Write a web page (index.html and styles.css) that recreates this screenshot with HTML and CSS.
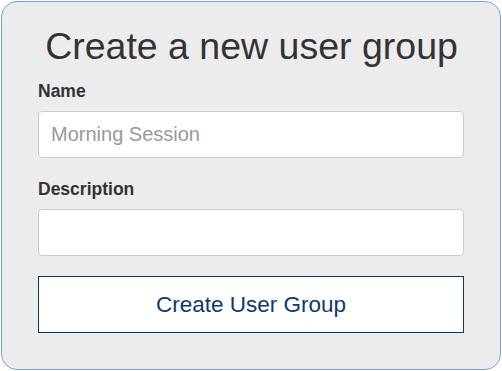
FILE: index.html
```html
<!DOCTYPE html>
<html lang="en">
<head>
    <meta charset="UTF-8">
    <meta name="viewport" content="width=device-width, initial-scale=1.0">
    <title>Create User Group</title>
    <link rel="stylesheet" href="styles.css">
</head>
<body>

    <div id="group-form">
        <h1>Create a new user group</h1>
        <div class="form-group">
            <label for="name">Name</label>
            <input type="text" id="name" placeholder="Morning Session">
        </div>
        <div class="form-group">
            <label for="description">Description</label>
            <input type="text" id="description">
        </div>
        <button class="create-btn">Create User Group</button>
    </div>

</body>
</html>
```

FILE: styles.css
```css
/* General Styles */
body {
    font-family: 'Liberation Sans', Arial, sans-serif;
    margin: 0;
    padding: 1px;
    color: #333;
}

#group-form {
    width: 427px;
    height: 309px;
    background: #ececec;
    border: 1px solid #74a6de;
    border-radius: 16px;
    padding: 24px 35px 34px 36px;
}

h1 {
    font-size: 37.5px;
    font-weight: normal;
    line-height: 41px;
    text-align: center;
    margin: 0 0 14px 0;
}

.form-group {
    margin-bottom: 21px;
}

.form-group label {
    display: block;
    font-size: 17.5px;
    font-weight: bold;
    line-height: 21px;
    margin-bottom: 9px;
}

.form-group input {
    display: block;
    box-sizing: border-box;
    width: 426px;
    height: 47px;
    padding: 0 12px;
    font-family: inherit;
    font-size: 20px;
    color: #555;
    background: #fff;
    border: 1px solid #ccc;
    border-radius: 4px;
    margin: 0;
}

.form-group input::placeholder {
    color: #999;
}

.create-btn {
    display: block;
    box-sizing: border-box;
    width: 426px;
    height: 57px;
    margin-top: -1px;
    font-family: inherit;
    font-size: 22.5px;
    color: #0d3b6e;
    background: #fff;
    border: 1px solid #003a70;
    border-radius: 0;
    cursor: pointer;
}
```
